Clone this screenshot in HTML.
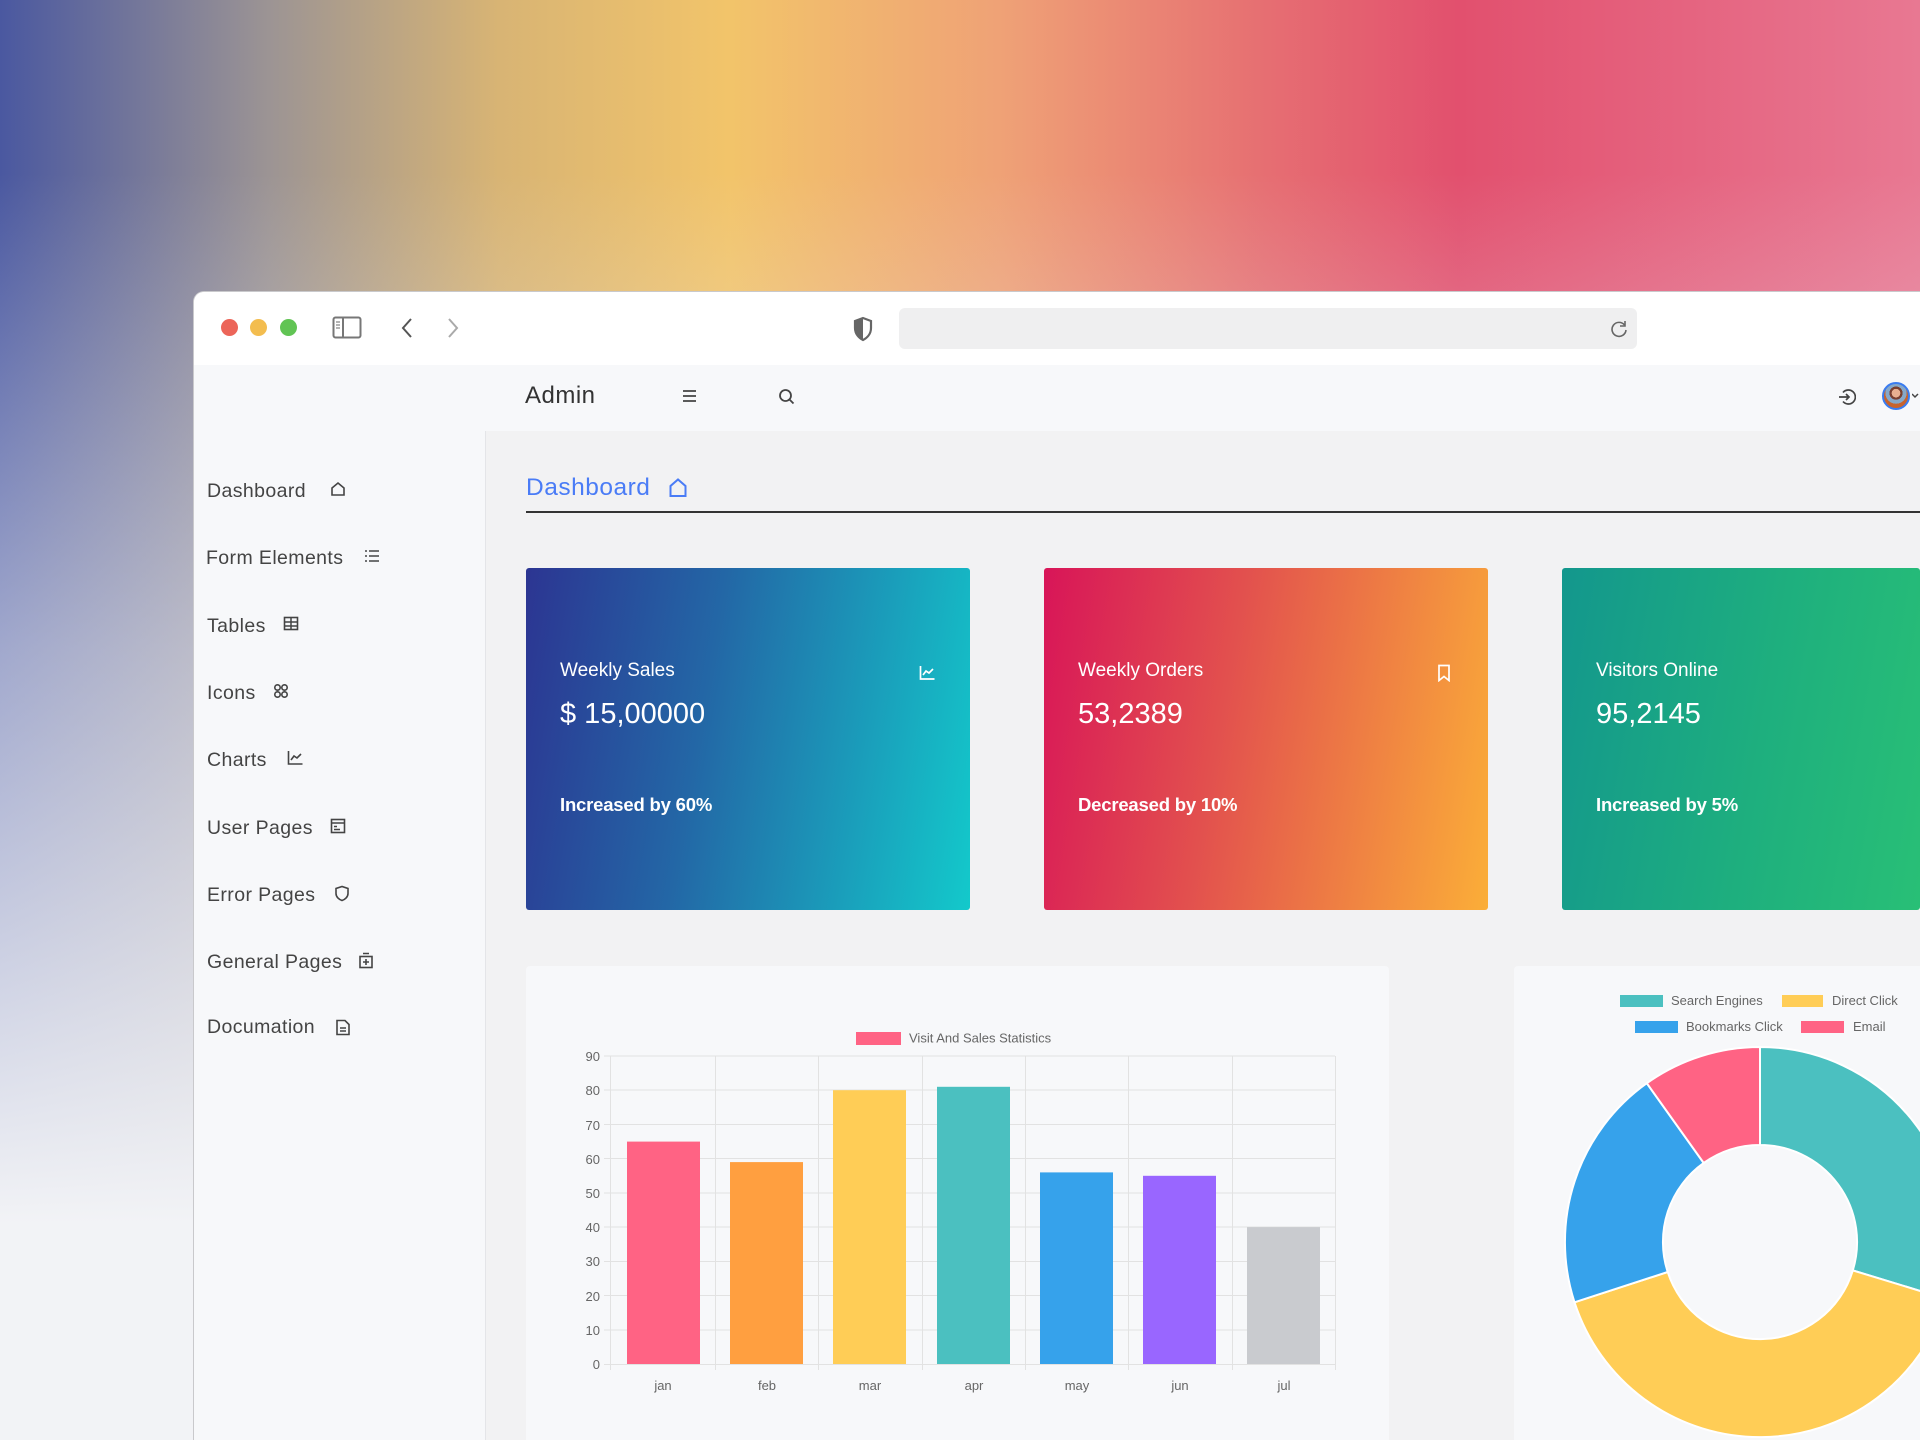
<!DOCTYPE html>
<html style="width:1920px;height:1440px;overflow:hidden"><head><meta charset="utf-8"><style>
*{margin:0;padding:0;box-sizing:border-box}
body{width:1920px;height:1440px;overflow:hidden;position:relative;font-family:"Liberation Sans",sans-serif;
background:linear-gradient(180deg,rgba(238,240,245,0) 0%,rgba(238,240,245,0) 12%,rgba(232,234,242,.55) 45%,rgba(242,243,246,1) 85%),
linear-gradient(90deg,#4a58a0 0%,#9c9494 14%,#d8b474 26%,#f2c46a 38%,#efa276 52%,#e66e72 66%,#e2506e 76%,#e87892 100%);}
.a{position:absolute}
.win{left:193px;top:291px;width:1727px;height:1149px;background:#f7f8fa;border:1px solid #c9c9cc;border-right:none;border-bottom:none;border-radius:11px 0 0 0;overflow:hidden}
.tb{left:0;top:0;width:100%;height:73px;background:#fff}
.dot{width:17px;height:17px;border-radius:50%;top:27px}
.side{color:#444;font-size:19.5px;letter-spacing:.4px}
.card{top:568px;height:342px;border-radius:3px;color:#fff;overflow:hidden}
.card .t{position:absolute;left:34px;top:92px;font-size:19px}
.card .v{position:absolute;left:34px;top:130px;font-size:29px}
.card .b{position:absolute;left:34px;top:226px;font-size:18.5px;font-weight:bold;letter-spacing:-.2px}
</style></head><body>
<div class="a win">
 <div class="a tb">
  <div class="a dot" style="left:27px;background:#ec6559"></div>
  <div class="a dot" style="left:56px;background:#f3bd4f"></div>
  <div class="a dot" style="left:86px;background:#61c454"></div>
  <svg class="a" style="left:138px;top:24px" width="30" height="24" viewBox="0 0 30 24"><rect x="1.5" y="1.5" width="27" height="20" rx="2" fill="none" stroke="#777" stroke-width="2"/><line x1="11" y1="2" x2="11" y2="21" stroke="#777" stroke-width="2"/><path d="M4 6h4M4 9h4M4 12h4" stroke="#888" stroke-width="1.3"/></svg>
  <svg class="a" style="left:206px;top:25px" width="14" height="22"><path d="M11 2L3 11l8 9" fill="none" stroke="#555" stroke-width="2"/></svg>
  <svg class="a" style="left:252px;top:25px" width="14" height="22"><path d="M3 2l8 9-8 9" fill="none" stroke="#aaa" stroke-width="2"/></svg>
  <svg class="a" style="left:658px;top:24px" width="22" height="26"><path d="M11 2L3 5v7c0 6 4 10 8 12 4-2 8-6 8-12V5z" fill="none" stroke="#666" stroke-width="2.2"/><path d="M11 2L3 5v7c0 6 4 10 8 12z" fill="#666"/></svg>
  <div class="a" style="left:705px;top:16px;width:738px;height:41px;background:#efeff0;border-radius:6px"></div>
  <svg class="a" style="left:1416px;top:28px" width="18" height="18"><path d="M14.5 5A7 7 0 1 0 16 10" fill="none" stroke="#666" stroke-width="1.6"/><path d="M15 1v5h-5" fill="none" stroke="#666" stroke-width="1.6"/></svg>
 </div>
 <div class="a" style="left:291px;top:139px;width:1px;height:1010px;background:#e4e5e8"></div>
 <div class="a" style="left:292px;top:139px;width:1435px;height:1010px;background:#f2f2f3"></div>
</div>
<div class="a" style="left:525px;top:382px;font-size:24px;color:#333;letter-spacing:.5px">Admin</div>
<svg class="a" style="left:682px;top:389px" width="15" height="14"><path d="M1 2h13M1 7h13M1 12h13" stroke="#444" stroke-width="1.8"/></svg>
<svg class="a" style="left:778px;top:388px" width="17" height="17"><circle cx="7.5" cy="7.5" r="5.5" fill="none" stroke="#444" stroke-width="1.8"/><path d="M11.5 11.5l4 4" stroke="#444" stroke-width="1.8"/></svg>
<svg class="a" style="left:1838px;top:388px" width="18" height="18"><path d="M5 4.5A7 7 0 1 1 5 13.5" fill="none" stroke="#444" stroke-width="1.7"/><path d="M1 9h10M8 6l3 3-3 3" fill="none" stroke="#444" stroke-width="1.7"/></svg>
<div class="a" style="left:1882px;top:382px;width:28px;height:28px;border-radius:50%;border:2px solid #3a7cf0;background:radial-gradient(circle at 50% 38%,#e8b090 0 22%,#7a4030 23% 34%,#86a8c8 35% 55%,#c8632c 56%)"></div>
<svg class="a" style="left:1912px;top:393px" width="7" height="6"><path d="M0 1l3 3 3-3" fill="none" stroke="#444" stroke-width="1.5"/></svg>
<div class="a side" style="left:207px;top:480px">Dashboard</div>
<svg class="a" style="left:330px;top:481px" width="16" height="16"><path d="M2 14V7l6-5 6 5v7z" fill="none" stroke="#444" stroke-width="1.6"/></svg>
<div class="a side" style="left:206px;top:547px">Form Elements</div>
<svg class="a" style="left:364px;top:549px" width="16" height="15"><path d="M1 2h2M1 7h2M1 12h2M5 2h10M5 7h10M5 12h10" stroke="#444" stroke-width="1.6"/></svg>
<div class="a side" style="left:207px;top:615px">Tables</div>
<svg class="a" style="left:283px;top:616px" width="16" height="16"><rect x="1.5" y="1.5" width="13" height="12" fill="none" stroke="#444" stroke-width="1.6"/><path d="M1.5 6h13M1.5 10h13M8 1.5v12" stroke="#444" stroke-width="1.5"/></svg>
<div class="a side" style="left:207px;top:682px">Icons</div>
<svg class="a" style="left:273px;top:683px" width="16" height="16"><g fill="none" stroke="#444" stroke-width="1.6"><circle cx="4.5" cy="4.5" r="2.7"/><circle cx="11.5" cy="4.5" r="2.7"/><circle cx="4.5" cy="11.5" r="2.7"/><circle cx="11.5" cy="11.5" r="2.7"/></g></svg>
<div class="a side" style="left:207px;top:749px">Charts</div>
<svg class="a" style="left:287px;top:750px" width="16" height="16"><path d="M1.5 1v13h14M4 10l3-4 3 2 4-4" fill="none" stroke="#444" stroke-width="1.6"/></svg>
<div class="a side" style="left:207px;top:817px">User Pages</div>
<svg class="a" style="left:330px;top:818px" width="16" height="16"><rect x="1.5" y="1.5" width="13" height="13" fill="none" stroke="#444" stroke-width="1.6"/><path d="M1.5 5h13M4 8.5h3M4 11.5h6" stroke="#444" stroke-width="1.5"/></svg>
<div class="a side" style="left:207px;top:884px">Error Pages</div>
<svg class="a" style="left:334px;top:885px" width="16" height="17"><path d="M8 1.5L2 3.5v5c0 3.5 3 6 6 7 3-1 6-3.5 6-7v-5z" fill="none" stroke="#444" stroke-width="1.6"/></svg>
<div class="a side" style="left:207px;top:951px">General Pages</div>
<svg class="a" style="left:358px;top:952px" width="16" height="17"><rect x="2" y="4.5" width="12" height="11" fill="none" stroke="#444" stroke-width="1.6"/><path d="M5 1.5h6M8 7v6M5 10h6" stroke="#444" stroke-width="1.6"/></svg>
<div class="a side" style="left:207px;top:1016px">Documation</div>
<svg class="a" style="left:335px;top:1019px" width="16" height="17"><path d="M2 1.5h8l4 4v10H2z" fill="none" stroke="#444" stroke-width="1.6"/><path d="M5 9h6M5 12h6" stroke="#444" stroke-width="1.5"/></svg>
<div class="a" style="left:526px;top:474px;font-size:24.5px;color:#4a7cf6;letter-spacing:.5px">Dashboard</div>
<svg class="a" style="left:668px;top:477px" width="20" height="22"><path d="M2.5 19V9l7.5-6.5L17.5 9v10z" fill="none" stroke="#4a7cf6" stroke-width="2"/></svg>
<div class="a" style="left:526px;top:511px;width:1394px;height:2px;background:#333"></div>
<div class="a card" style="left:526px;width:444px;background:linear-gradient(100deg,#2c3592 0%,#2367a6 40%,#13c9cb 100%)">
 <div class="t">Weekly Sales</div><div class="v">$ 15,00000</div><div class="b">Increased by 60%</div>
 <svg class="a" style="left:393px;top:97px" width="16" height="16"><path d="M1.5 1v13h14M4 10l3-4 3 2 4-4" fill="none" stroke="#fff" stroke-width="1.7"/></svg>
</div>
<div class="a card" style="left:1044px;width:444px;background:linear-gradient(100deg,#d81558 0%,#e2504e 40%,#fbae38 100%)">
 <div class="t">Weekly Orders</div><div class="v">53,2389</div><div class="b">Decreased by 10%</div>
 <svg class="a" style="left:393px;top:96px" width="14" height="18"><path d="M2 1.5h10v15l-5-4-5 4z" fill="none" stroke="#fff" stroke-width="1.7"/></svg>
</div>
<div class="a card" style="left:1562px;width:358px;background:linear-gradient(100deg,#13978d 0%,#1eaf7e 55%,#2ec872 124%)">
 <div class="t">Visitors Online</div><div class="v">95,2145</div><div class="b">Increased by 5%</div>
</div>
<div class="a" style="left:526px;top:966px;width:863px;height:474px;background:#f7f8fa;border-radius:4px 4px 0 0"></div>
<div class="a" style="left:1514px;top:966px;width:406px;height:474px;background:#f7f8fa;border-radius:4px 0 0 0"></div>
<svg class="a" style="left:0;top:0" width="1920" height="1440" font-family="Liberation Sans, sans-serif" font-size="13" fill="#666">
 <g stroke="#e2e2e2" stroke-width="1">
  <path d="M604 1364.5H1335M604 1330H1335M604 1295.5H1335M604 1261.5H1335M604 1227H1335M604 1193H1335M604 1158.5H1335M604 1124.5H1335M604 1090H1335M604 1056H1335"/>
  <path d="M610.5 1056V1370M715.5 1056V1370M818.5 1056V1370M922.5 1056V1370M1025.5 1056V1370M1128.5 1056V1370M1232.5 1056V1370M1335.5 1056V1370"/>
 </g>
 <g text-anchor="end">
  <text x="600" y="1369">0</text><text x="600" y="1335">10</text><text x="600" y="1301">20</text><text x="600" y="1266">30</text><text x="600" y="1232">40</text><text x="600" y="1198">50</text><text x="600" y="1164">60</text><text x="600" y="1130">70</text><text x="600" y="1095">80</text><text x="600" y="1061">90</text>
 </g>
 <rect x="627" y="1141.6" width="73" height="222.4" fill="#ff6384"/>
 <rect x="730" y="1162.1" width="73" height="201.9" fill="#ff9f40"/>
 <rect x="833" y="1090.2" width="73" height="273.8" fill="#ffcd56"/>
 <rect x="937" y="1086.8" width="73" height="277.2" fill="#4bc0c0"/>
 <rect x="1040" y="1172.4" width="73" height="191.6" fill="#36a2eb"/>
 <rect x="1143" y="1175.8" width="73" height="188.2" fill="#9966ff"/>
 <rect x="1247" y="1227.1" width="73" height="136.9" fill="#c9cbcf"/>
 <g text-anchor="middle">
  <text x="663" y="1390">jan</text><text x="767" y="1390">feb</text><text x="870" y="1390">mar</text><text x="974" y="1390">apr</text><text x="1077" y="1390">may</text><text x="1180" y="1390">jun</text><text x="1284" y="1390">jul</text>
 </g>
 <rect x="856" y="1032" width="45" height="13" fill="#ff6384"/>
 <text x="909" y="1042.5">Visit And Sales Statistics</text>
 <g stroke="#fff" stroke-width="2">
  <path fill="#4bc0c0" d="M1760 1047A195 195 0 0 1 1946.5 1299L1852.8 1270.4A97 97 0 0 0 1760 1145Z"/>
  <path fill="#ffcd56" d="M1946.5 1299A195 195 0 0 1 1574.5 1302.3L1667.7 1272A97 97 0 0 0 1852.8 1270.4Z"/>
  <path fill="#36a2eb" d="M1574.5 1302.3A195 195 0 0 1 1646.8 1083.2L1703.7 1163A97 97 0 0 0 1667.7 1272Z"/>
  <path fill="#ff6384" d="M1646.8 1083.2A195 195 0 0 1 1760 1047L1760 1145A97 97 0 0 0 1703.7 1163Z"/>
 </g>
 <rect x="1620" y="995" width="43" height="12" fill="#4bc0c0"/><text x="1671" y="1005">Search Engines</text>
 <rect x="1782" y="995" width="41" height="12" fill="#ffcd56"/><text x="1832" y="1005">Direct Click</text>
 <rect x="1635" y="1021" width="43" height="12" fill="#36a2eb"/><text x="1686" y="1031">Bookmarks Click</text>
 <rect x="1801" y="1021" width="43" height="12" fill="#ff6384"/><text x="1853" y="1031">Email</text>
</svg>
</body></html>
